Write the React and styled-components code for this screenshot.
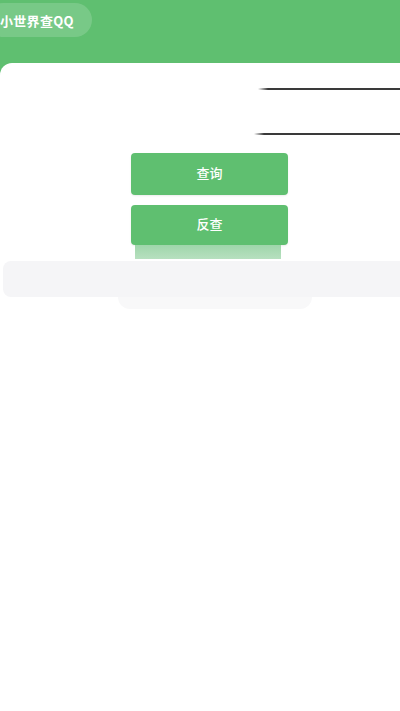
import styled, { createGlobalStyle } from 'styled-components';

const GlobalStyle = createGlobalStyle`
  html, body {
    margin: 0;
    padding: 0;
    background: #ffffff;
    font-family: "Noto Sans CJK SC", "Noto Sans", sans-serif;
  }
`;

const Page = styled.div`
  width: 400px;
  height: 711px;
  overflow: hidden;
  background: #5fbf70;
  display: flex;
  flex-direction: column;
`;

const Header = styled.div`
  height: 63px;
  padding-top: 3px;
  box-sizing: border-box;
  flex-shrink: 0;
`;

const TitlePill = styled.div`
  display: inline-flex;
  align-items: center;
  height: 34px;
  margin-left: -14px;
  padding: 0 18px 0 14px;
  border-radius: 17px;
  background: rgba(255, 255, 255, 0.16);
  color: #ffffff;
  font-size: 13px;
  font-weight: 700;
  letter-spacing: 0.3px;
`;

const Card = styled.div`
  flex: 1;
  background: #ffffff;
  border-top-left-radius: 12px;
  display: flex;
  flex-direction: column;
  align-items: stretch;
`;

const Field = styled.div`
  height: ${(p) => p.$h}px;
  display: flex;
  align-items: flex-end;
  margin-left: ${(p) => p.$indent}px;
`;

const FieldLine = styled.div`
  width: 100%;
  height: 2px;
  background: linear-gradient(to right, rgba(60, 60, 60, 0) 0px, #3a3a3a 10px);
`;

const Actions = styled.div`
  margin-top: 18px;
  padding-left: 131px;
  display: flex;
  flex-direction: column;
  align-items: flex-start;
  gap: 10px;
`;

const Button = styled.button`
  width: 157px;
  height: ${(p) => p.$h}px;
  border: 0;
  border-radius: 4px;
  background: #5fbf70;
  color: #ffffff;
  font-family: inherit;
  font-size: 13px;
  font-weight: 500;
  line-height: 1;
  box-shadow: 0 1px 2px rgba(0, 0, 0, 0.08);
  padding: 0 0 3px;
`;

const Stack = styled.div`
  display: flex;
  flex-direction: column;
  align-items: flex-start;
`;

const Ghost = styled.div`
  width: 146px;
  height: 14px;
  margin-left: 4px;
  background: linear-gradient(to bottom, #9fd6aa, #b7e0bf);
`;

const Panel = styled.div`
  margin: 2px 0 0 3px;
  height: 36px;
  background: #f5f5f7;
  border-radius: 8px 0 0 8px;
`;

const PanelTail = styled.div`
  align-self: center;
  width: 194px;
  height: 12px;
  margin-left: 30px;
  background: #f8f8f9;
  border-radius: 0 0 12px 12px;
`;

export default function App() {
  return (
    <>
      <GlobalStyle />
      <Page>
        <Header>
          <TitlePill>小世界查QQ</TitlePill>
        </Header>
        <Card>
          <Field $h={27} $indent={258}>
            <FieldLine />
          </Field>
          <Field $h={45} $indent={254}>
            <FieldLine />
          </Field>
          <Actions>
            <Button $h={42}>查询</Button>
            <Stack>
              <Button $h={40}>反查</Button>
              <Ghost />
            </Stack>
          </Actions>
          <Panel />
          <PanelTail />
        </Card>
      </Page>
    </>
  );
}
